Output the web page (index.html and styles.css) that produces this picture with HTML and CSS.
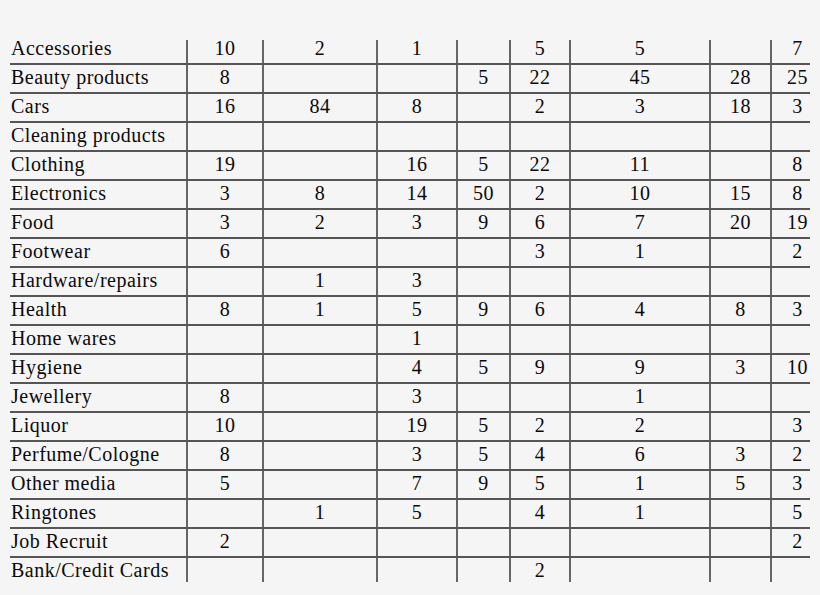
FILE: index.html
```html
<!DOCTYPE html>
<html lang="en">
<head>
<meta charset="utf-8">
<title>Category table</title>
<link rel="stylesheet" href="styles.css">
</head>
<body>
<div class="sheet">
  <div class="row first"><div class="c name">Accessories</div><div class="c">10</div><div class="c">2</div><div class="c">1</div><div class="c"></div><div class="c">5</div><div class="c">5</div><div class="c"></div><div class="c last">7</div></div>
  <div class="row"><div class="c name">Beauty products</div><div class="c">8</div><div class="c"></div><div class="c"></div><div class="c">5</div><div class="c">22</div><div class="c">45</div><div class="c">28</div><div class="c last">25</div></div>
  <div class="row"><div class="c name">Cars</div><div class="c">16</div><div class="c">84</div><div class="c">8</div><div class="c"></div><div class="c">2</div><div class="c">3</div><div class="c">18</div><div class="c last">3</div></div>
  <div class="row"><div class="c name">Cleaning products</div><div class="c"></div><div class="c"></div><div class="c"></div><div class="c"></div><div class="c"></div><div class="c"></div><div class="c"></div><div class="c last"></div></div>
  <div class="row"><div class="c name">Clothing</div><div class="c">19</div><div class="c"></div><div class="c">16</div><div class="c">5</div><div class="c">22</div><div class="c">11</div><div class="c"></div><div class="c last">8</div></div>
  <div class="row"><div class="c name">Electronics</div><div class="c">3</div><div class="c">8</div><div class="c">14</div><div class="c">50</div><div class="c">2</div><div class="c">10</div><div class="c">15</div><div class="c last">8</div></div>
  <div class="row"><div class="c name">Food</div><div class="c">3</div><div class="c">2</div><div class="c">3</div><div class="c">9</div><div class="c">6</div><div class="c">7</div><div class="c">20</div><div class="c last">19</div></div>
  <div class="row"><div class="c name">Footwear</div><div class="c">6</div><div class="c"></div><div class="c"></div><div class="c"></div><div class="c">3</div><div class="c">1</div><div class="c"></div><div class="c last">2</div></div>
  <div class="row"><div class="c name">Hardware/repairs</div><div class="c"></div><div class="c">1</div><div class="c">3</div><div class="c"></div><div class="c"></div><div class="c"></div><div class="c"></div><div class="c last"></div></div>
  <div class="row"><div class="c name">Health</div><div class="c">8</div><div class="c">1</div><div class="c">5</div><div class="c">9</div><div class="c">6</div><div class="c">4</div><div class="c">8</div><div class="c last">3</div></div>
  <div class="row"><div class="c name">Home wares</div><div class="c"></div><div class="c"></div><div class="c">1</div><div class="c"></div><div class="c"></div><div class="c"></div><div class="c"></div><div class="c last"></div></div>
  <div class="row"><div class="c name">Hygiene</div><div class="c"></div><div class="c"></div><div class="c">4</div><div class="c">5</div><div class="c">9</div><div class="c">9</div><div class="c">3</div><div class="c last">10</div></div>
  <div class="row"><div class="c name">Jewellery</div><div class="c">8</div><div class="c"></div><div class="c">3</div><div class="c"></div><div class="c"></div><div class="c">1</div><div class="c"></div><div class="c last"></div></div>
  <div class="row"><div class="c name">Liquor</div><div class="c">10</div><div class="c"></div><div class="c">19</div><div class="c">5</div><div class="c">2</div><div class="c">2</div><div class="c"></div><div class="c last">3</div></div>
  <div class="row"><div class="c name">Perfume/Cologne</div><div class="c">8</div><div class="c"></div><div class="c">3</div><div class="c">5</div><div class="c">4</div><div class="c">6</div><div class="c">3</div><div class="c last">2</div></div>
  <div class="row"><div class="c name">Other media</div><div class="c">5</div><div class="c"></div><div class="c">7</div><div class="c">9</div><div class="c">5</div><div class="c">1</div><div class="c">5</div><div class="c last">3</div></div>
  <div class="row"><div class="c name">Ringtones</div><div class="c"></div><div class="c">1</div><div class="c">5</div><div class="c"></div><div class="c">4</div><div class="c">1</div><div class="c"></div><div class="c last">5</div></div>
  <div class="row"><div class="c name">Job Recruit</div><div class="c">2</div><div class="c"></div><div class="c"></div><div class="c"></div><div class="c"></div><div class="c"></div><div class="c"></div><div class="c last">2</div></div>
  <div class="row final"><div class="c name">Bank/Credit Cards</div><div class="c"></div><div class="c"></div><div class="c"></div><div class="c"></div><div class="c">2</div><div class="c"></div><div class="c"></div><div class="c last"></div></div>
</div>
</body>
</html>
```
FILE: styles.css
```css
html, body {
  margin: 0;
  padding: 0;
  background: #f5f5f5;
}

body {
  width: 820px;
  height: 595px;
  overflow: hidden;
  font-family: "Liberation Serif", "Times New Roman", serif;
  font-size: 20px;
  letter-spacing: 0.5px;
  color: #0a0a0a;
}

.sheet {
  padding: 40px 0 0 10px;
}

.row {
  display: grid;
  grid-template-columns: 176px 76px 114px 80px 53px 60px 140px 61px 40px;
  width: 800px;
  height: 29px;
  box-sizing: border-box;
  border-bottom: 2px solid #555555;
}

.row.first {
  height: 25px;
}

.row.final {
  height: 24px;
  border-bottom: none;
}

.c {
  box-sizing: border-box;
  border-left: 2px solid #666666;
  text-align: center;
  line-height: 24px;
  white-space: nowrap;
}

.row.first .c {
  line-height: 17px;
}

.c.name {
  border-left: none;
  text-align: left;
  padding-left: 1px;
}

.c.last {
  padding-left: 13px;
  overflow: visible;
}
```
